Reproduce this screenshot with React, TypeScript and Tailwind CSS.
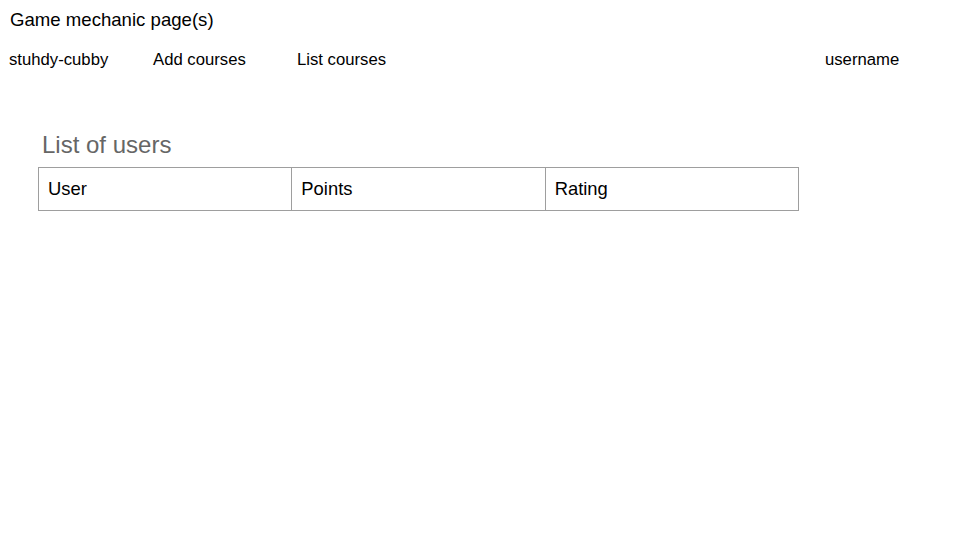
const COLUMNS = ["User", "Points", "Rating"];

export default function App() {
  return (
    <div className="w-[960px] h-[540px] bg-white text-black font-['Liberation_Sans',Arial,sans-serif]">
      <div className="pl-[10px] pt-[9px] text-[18.6px] leading-[22px]">Game mechanic page(s)</div>

      {/* nav */}
      <div className="flex items-center pt-[19px] text-[16.7px] leading-[20px]">
        <span className="pl-[9px] w-[153px]">stuhdy-cubby</span>
        <span className="w-[144px]">Add courses</span>
        <span className="w-[528px]">List courses</span>
        <span>username</span>
      </div>

      <div className="pl-[38px] pt-[61px]">
        <h2 className="pl-[4px] text-[24px] leading-[28px] text-[#666666]">List of users</h2>
        <table className="mt-[8px] w-[761px] table-fixed border-collapse text-[18.4px]">
          <thead>
            <tr>
              {COLUMNS.map((c) => (
                <th
                  key={c}
                  className="border border-[#9e9e9e] h-[43px] px-[9px] text-left font-normal align-middle"
                >
                  {c}
                </th>
              ))}
            </tr>
          </thead>
        </table>
      </div>
    </div>
  );
}
